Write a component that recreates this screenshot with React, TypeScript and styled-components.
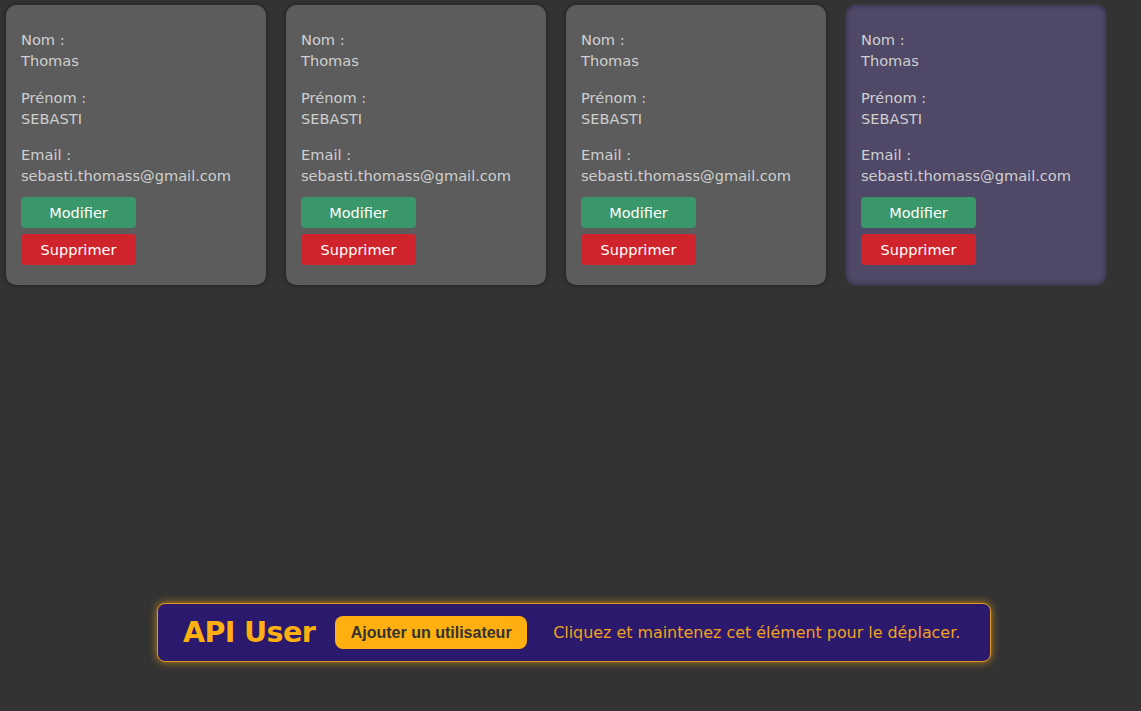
import React from "react";
import styled, { createGlobalStyle } from "styled-components";

const Global = createGlobalStyle`
  html, body { margin: 0; padding: 0; }
  body {
    background: #333333;
    font-family: "DejaVu Sans", "Noto Sans", sans-serif;
    width: 1141px;
    height: 711px;
    overflow: hidden;
  }
`;

const Page = styled.div`
  position: relative;
  width: 1141px;
  height: 711px;
`;

const CardList = styled.div`
  display: flex;
  gap: 20px;
  padding: 5px 6px;
`;

const Card = styled.div<{ $active?: boolean }>`
  box-sizing: border-box;
  width: 260px;
  height: 280px;
  padding: 24px 15px 20px;
  border-radius: 10px;
  background: ${(p) => (p.$active ? "#4f4866" : "#5c5c5c")};
  box-shadow: ${(p) =>
    p.$active
      ? "inset 0 0 5px rgba(30, 22, 50, 0.55), 0 0 3px rgba(79, 72, 102, 0.7)"
      : "0 0 5px rgba(0, 0, 0, 0.45)"};
  display: flex;
  flex-direction: column;
`;

const Fields = styled.div`
  display: flex;
  flex-direction: column;
  gap: 15.5px;
`;

const Field = styled.div`
  display: flex;
  flex-direction: column;
  color: #cfcfcf;
  font-size: 14.6px;
  line-height: 21px;
`;

const Actions = styled.div`
  display: flex;
  flex-direction: column;
  gap: 6px;
  margin-top: 11px;
`;

const ActionButton = styled.button<{ $variant: "edit" | "delete" }>`
  width: 115px;
  height: 31px;
  border: none;
  border-radius: 4px;
  padding: 0;
  background: ${(p) => (p.$variant === "edit" ? "#3a976a" : "#d0242c")};
  color: #ffffff;
  font-family: inherit;
  font-size: 14.5px;
  cursor: pointer;
`;

const Bar = styled.div`
  position: absolute;
  left: 157px;
  top: 603px;
  box-sizing: border-box;
  width: 834px;
  height: 59px;
  padding: 0 25px;
  display: flex;
  align-items: center;
  background: #2a196c;
  border: 1px solid #e39b17;
  border-radius: 8px;
  box-shadow: 0 0 9px rgba(255, 170, 20, 0.7);
`;

const Title = styled.h1`
  margin: 0 20px 0 0;
  color: #ffb010;
  font-family: "DejaVu Sans", sans-serif;
  font-weight: 700;
  font-size: 28.5px;
  letter-spacing: -0.6px;
`;

const AddButton = styled.button`
  width: 192px;
  height: 33px;
  border: none;
  border-radius: 8px;
  background: #ffb010;
  color: #333333;
  font-family: "Liberation Sans", Arial, sans-serif;
  font-weight: 700;
  font-size: 16px;
  padding: 0;
  margin-right: 26px;
  cursor: pointer;
`;

const Hint = styled.span`
  color: #f2a21b;
  font-size: 15.9px;
`;

const users = [0, 1, 2, 3].map((i) => ({
  id: i,
  nom: "Thomas",
  prenom: "SEBASTI",
  email: "sebasti.thomass@gmail.com",
}));

export default function App() {
  return (
    <Page>
      <Global />
      <CardList>
        {users.map((u) => (
          <Card key={u.id} $active={u.id === 3}>
            <Fields>
              <Field>
                <span>Nom :</span>
                <span>{u.nom}</span>
              </Field>
              <Field>
                <span>Prénom :</span>
                <span>{u.prenom}</span>
              </Field>
              <Field>
                <span>Email :</span>
                <span>{u.email}</span>
              </Field>
            </Fields>
            <Actions>
              <ActionButton $variant="edit">Modifier</ActionButton>
              <ActionButton $variant="delete">Supprimer</ActionButton>
            </Actions>
          </Card>
        ))}
      </CardList>
      <Bar>
        <Title>API User</Title>
        <AddButton>Ajouter un utilisateur</AddButton>
        <Hint>Cliquez et maintenez cet élément pour le déplacer.</Hint>
      </Bar>
    </Page>
  );
}
